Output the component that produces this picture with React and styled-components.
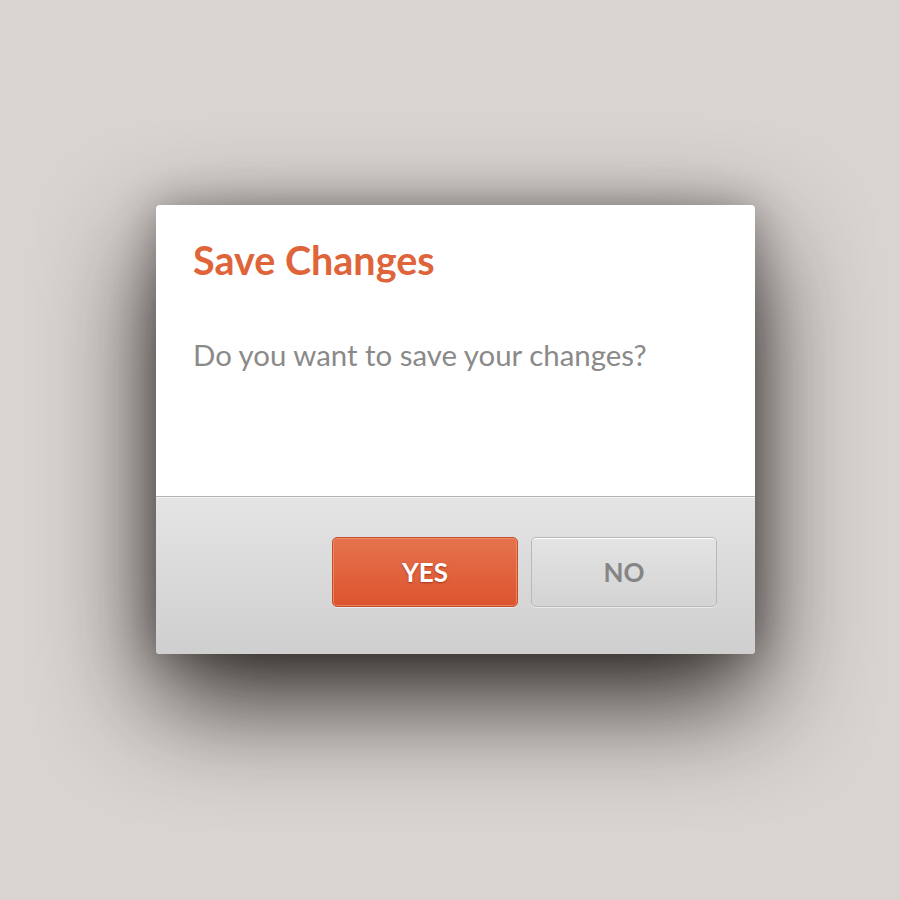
import styled, { createGlobalStyle } from 'styled-components';

const GlobalStyle = createGlobalStyle`
    html, body {
        margin: 0;
        padding: 0;
        background: #d9d4d1;
    }
    body {
        font-family: Lato, "Open Sans", sans-serif;
    }
`;

const App = () => {
    return (
        <Page>
            <GlobalStyle />
            <Dialog>
                <Body>
                    <Title>Save Changes</Title>
                    <Message>Do you want to save your changes?</Message>
                </Body>
                <Footer>
                    <Button $primary>YES</Button>
                    <Button>NO</Button>
                </Footer>
            </Dialog>
        </Page>
    );
};

const Page = styled.div`
    width: 900px;
    height: 900px;
    box-sizing: border-box;
    padding: 205px 0 0 156px;
    display: flex;
    align-items: flex-start;
    background: #d9d4d1;
`;

const Dialog = styled.div`
    width: 599px;
    height: 449px;
    border-radius: 4px;
    overflow: hidden;
    display: flex;
    flex-direction: column;
    background: #fff;
    box-shadow: 0 44px 110px rgba(20, 15, 12, 0.9), 0 0 40px rgba(20, 15, 12, 0.3);
`;

const Body = styled.div`
    height: 292px;
    padding: 31px 37px 0;
    box-sizing: border-box;
    border-bottom: 1px solid #b4b4b4;
`;

const Title = styled.h1`
    margin: 0;
    font-family: Lato, sans-serif;
    font-weight: 700;
    font-size: 39.5px;
    line-height: 48px;
    color: #e0643a;
`;

const Message = styled.p`
    margin: 53px 0 0;
    font-family: Lato, sans-serif;
    font-weight: 400;
    font-size: 29.4px;
    line-height: 35px;
    color: #8a8a8a;
`;

const Footer = styled.div`
    flex: 1;
    display: flex;
    justify-content: flex-end;
    align-items: flex-start;
    gap: 13px;
    padding: 39px 38px 0;
    border-top: 1px solid #f4f4f4;
    background: linear-gradient(to bottom, #e4e4e4, #cfcfcf);
`;

const Button = styled.button`
    width: 186px;
    height: 70px;
    box-sizing: border-box;
    border-radius: 5px;
    font-family: Lato, sans-serif;
    font-weight: 700;
    font-size: 26px;
    cursor: pointer;
    border: 1px solid ${props => props.$primary ? '#c24e2c' : '#b9b9b9'};
    color: ${props => props.$primary ? '#ffffff' : '#858585'};
    background: ${props => props.$primary
        ? 'linear-gradient(to bottom, #e5734d, #dc542f)'
        : 'linear-gradient(to bottom, #e4e4e4, #d3d3d3)'};
    box-shadow: ${props => props.$primary
        ? 'inset 0 0 0 1px rgba(250, 160, 130, 0.55)'
        : 'inset 0 1px 0 rgba(255, 255, 255, 0.9)'},
        0 1px 0 rgba(255, 255, 255, 0.5);
    text-shadow: ${props => props.$primary ? '0 1px 2px rgba(120, 30, 0, 0.6)' : 'none'};
`;

export default App;
